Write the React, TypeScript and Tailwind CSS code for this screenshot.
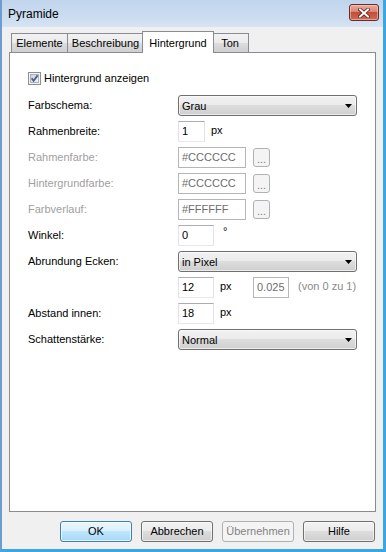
import React from 'react';

const Label = ({ text, disabled }: { text: string; disabled?: boolean }) => (
  <div className={`w-[150px] shrink-0 leading-[20px] ${disabled ? 'text-[#a0a0a0]' : 'text-black'}`}>{text}</div>
);

const Input = ({ value, w, disabled }: { value: string; w: string; disabled?: boolean }) => (
  <div
    className={`${w} h-[21px] shrink-0 border bg-white pl-[3px] leading-[19px] ${
      disabled
        ? 'border-[#b5b5b5] text-[#6d6d6d]'
        : 'border-[#e2e3ea] border-t-[#abadb3] border-b-[#e3e9ef] text-black'
    }`}
  >
    {value}
  </div>
);

const Select = ({ value }: { value: string }) => (
  <div className="w-[179px] h-[21px] shrink-0 flex items-center justify-between rounded-[3px] border border-[#707070] bg-[linear-gradient(#f2f2f2,#ebebeb_50%,#dddddd_50%,#cfcfcf)] pl-[3px] pr-[4px] shadow-[inset_0_0_0_1px_rgba(255,255,255,0.6)]">
    <span className="pt-[1px]">{value}</span>
    <svg width="7" height="4" viewBox="0 0 7 4">
      <path d="M0 0 H7 L3.5 4 Z" fill="#000" />
    </svg>
  </div>
);

const DotsButton = () => (
  <div className="ml-[7px] mt-[1px] w-[17px] h-[19px] shrink-0 rounded-[3px] border border-[#adb2b5] bg-[#f4f4f4] text-[#838383] text-center leading-[20px]">
    ...
  </div>
);

const Row = ({ children }: { children: React.ReactNode }) => (
  <div className="flex items-start h-[21px]">{children}</div>
);

const Tab = ({ text, w }: { text: string; w: string }) => (
  <div className={`${w} h-[19px] flex items-center justify-center border border-b-0 border-[#898c95] bg-[linear-gradient(#f2f2f2,#ebebeb_50%,#dddddd_50%,#cfcfcf)] -ml-px first:ml-0 pt-[1px]`}>
    {text}
  </div>
);

const Button = ({ text, kind }: { text: string; kind?: 'default' | 'disabled' }) => {
  if (kind === 'default')
    return (
      <div className="w-[72px] h-[21px] rounded-[3px] border border-[#3c7fb1] bg-[linear-gradient(#eaf6fd,#d9f0fc_50%,#bee6fd_50%,#a7d9f5)] shadow-[inset_0_0_0_1px_rgba(255,255,255,0.7)] flex items-center justify-center">
        {text}
      </div>
    );
  if (kind === 'disabled')
    return (
      <div className="w-[72px] h-[21px] rounded-[3px] border border-[#adb2b5] bg-[#f4f4f4] text-[#838383] flex items-center justify-center">
        {text}
      </div>
    );
  return (
    <div className="w-[72px] h-[21px] rounded-[3px] border border-[#707070] bg-[linear-gradient(#f2f2f2,#ebebeb_50%,#dddddd_50%,#cfcfcf)] shadow-[inset_0_0_0_1px_rgba(255,255,255,0.6)] flex items-center justify-center">
      {text}
    </div>
  );
};

export default function App() {
  return (
    <div className="w-[386px] h-[552px] flex flex-col bg-[#f0f0f0] border-l-2 border-l-[#6f9ccf] border-r-[3px] border-r-[#3aa6e3] border-b-[3px] border-b-[#3aa6e3] font-['Liberation_Sans',Arial,sans-serif] text-[11px] text-black overflow-hidden">
      {/* title bar */}
      <div className="h-[27px] shrink-0 flex items-center justify-between bg-[linear-gradient(#c0d5ec,#cbdcf0_60%,#d6e4f3)] pl-[6px] pr-[4px]">
        <span className="text-[12px] text-black pt-[1px]">Pyramide</span>
        <div className="w-[30px] h-[17px] mt-[-2px] rounded-[3px] border border-[#6b2b22] bg-[linear-gradient(#e9a99b,#d98677_45%,#c44c38_50%,#cf6c55)] flex items-center justify-center shadow-[inset_0_0_0_1px_rgba(255,220,210,0.5)]">
          <svg width="12" height="10" viewBox="0 0 12 10">
            <path d="M2 1.5 L10 8.5 M10 1.5 L2 8.5" stroke="#5a1d15" strokeWidth="3.6" strokeLinecap="square" />
            <path d="M2 1.5 L10 8.5 M10 1.5 L2 8.5" stroke="#ffffff" strokeWidth="2" strokeLinecap="square" />
          </svg>
        </div>
      </div>

      {/* body */}
      <div className="flex-1 flex flex-col px-[7px] pt-[4px]">
        {/* tabs */}
        <div className="flex items-end h-[21px] pl-[2px] relative z-10">
          <Tab text="Elemente" w="w-[57px]" />
          <Tab text="Beschreibung" w="w-[77px]" />
          <div className="w-[72px] h-[22px] -mx-[2px] -mb-px relative z-10 flex items-start justify-center pt-[3px] border border-b-0 border-[#898c95] bg-white">
            Hintergrund
          </div>
          <Tab text="Ton" w="w-[38px]" />
        </div>

        {/* panel */}
        <div className="flex-1 border border-[#898c95] bg-white pl-[18px] pt-[19px]">
          <div className="flex items-center h-[13px]">
            <svg width="13" height="13" viewBox="0 0 13 13">
              <defs>
                <linearGradient id="cb" x1="0" y1="0" x2="1" y2="1">
                  <stop offset="0" stopColor="#cbcfd5" />
                  <stop offset="1" stopColor="#f6f6f6" />
                </linearGradient>
              </defs>
              <rect x="0.5" y="0.5" width="12" height="12" fill="#f4f4f4" stroke="#8e8f8f" />
              <rect x="2.5" y="2.5" width="8" height="8" fill="url(#cb)" stroke="#aeb3b9" />
              <path d="M3.6 6.3 L5.6 8.8 L9.6 3.4" stroke="#4a5f97" strokeWidth="1.8" fill="none" />
            </svg>
            <span className="ml-[3px]">Hintergrund anzeigen</span>
          </div>

          <div className="mt-[10px] flex flex-col gap-[5px]">
            <Row>
              <Label text="Farbschema:" />
              <Select value="Grau" />
            </Row>
            <Row>
              <Label text="Rahmenbreite:" />
              <Input value="1" w="w-[27px]" />
              <span className="ml-[6px] leading-[18px]">px</span>
            </Row>
            <Row>
              <Label text="Rahmenfarbe:" disabled />
              <Input value="#CCCCCC" w="w-[68px]" disabled />
              <DotsButton />
            </Row>
            <Row>
              <Label text="Hintergrundfarbe:" disabled />
              <Input value="#CCCCCC" w="w-[68px]" disabled />
              <DotsButton />
            </Row>
            <Row>
              <Label text="Farbverlauf:" disabled />
              <Input value="#FFFFFF" w="w-[68px]" disabled />
              <DotsButton />
            </Row>
            <Row>
              <Label text="Winkel:" />
              <Input value="0" w="w-[36px]" />
              <span className="ml-[9px] leading-[12px]">°</span>
            </Row>
            <Row>
              <Label text="Abrundung Ecken:" />
              <Select value="in Pixel" />
            </Row>
            <Row>
              <div className="w-[150px] shrink-0" />
              <Input value="12" w="w-[36px]" />
              <span className="ml-[6px] w-[33px] leading-[18px]">px</span>
              <Input value="0.025" w="w-[36px]" disabled />
              <span className="ml-[9px] leading-[18px] text-[#8a8a8a]">(von 0 zu 1)</span>
            </Row>
            <Row>
              <Label text="Abstand innen:" />
              <Input value="18" w="w-[36px]" />
              <span className="ml-[6px] leading-[18px]">px</span>
            </Row>
            <Row>
              <Label text="Schattenstärke:" />
              <Select value="Normal" />
            </Row>
          </div>
        </div>

        {/* buttons */}
        <div className="h-[37px] shrink-0 flex items-start justify-end gap-[9px] pt-[9px] pr-[1px]">
          <Button text="OK" kind="default" />
          <Button text="Abbrechen" />
          <Button text="Übernehmen" kind="disabled" />
          <Button text="Hilfe" />
        </div>
      </div>
    </div>
  );
}
